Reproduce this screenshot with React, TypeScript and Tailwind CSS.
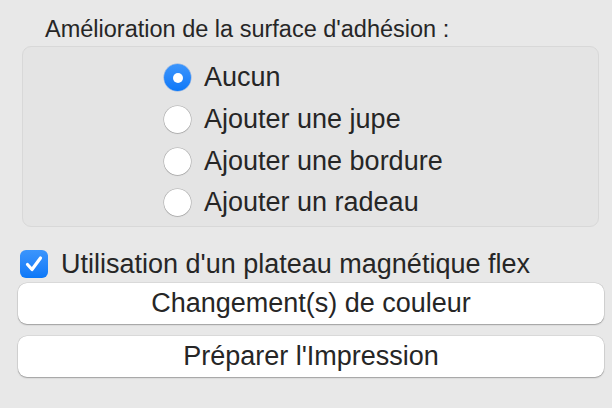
import React from 'react';

const options = ['Aucun', 'Ajouter une jupe', 'Ajouter une bordure', 'Ajouter un radeau'];

const Radio: React.FC<{ checked: boolean }> = ({ checked }) =>
  checked ? (
    <span className="flex h-[27px] w-[27px] shrink-0 items-center justify-center rounded-full bg-gradient-to-b from-[#3b95fc] to-[#0a78f8] shadow-[0_0_0_0.5px_rgba(0,90,220,0.4)]">
      <span className="h-[10px] w-[10px] rounded-full bg-white" />
    </span>
  ) : (
    <span className="h-[27px] w-[27px] shrink-0 rounded-full bg-white shadow-[0_0_0_0.5px_rgba(0,0,0,0.25),0_1px_1px_rgba(0,0,0,0.12)]" />
  );

const App: React.FC = () => {
  const selected = 0;

  return (
    <div
      className="flex h-[408px] w-[612px] flex-col bg-[#e8e8e8] text-[#262626]"
      style={{ fontFamily: '"Liberation Sans", Arial, sans-serif' }}
    >
      <div className="pl-[45px] pt-[14px] text-[23.5px] leading-[30px]">
        Amélioration de la surface d'adhésion :
      </div>

      <div className="ml-[22px] mt-[2px] h-[181px] w-[577px] rounded-[9px] border border-[#d8d8d8] bg-[#e4e4e4] pl-[141px] pt-[10px]">
        {options.map((label, i) => (
          <div key={label} className="flex h-[41.7px] items-center gap-[13px]">
            <Radio checked={i === selected} />
            <span className="text-[27px] leading-none">{label}</span>
          </div>
        ))}
      </div>

      <div className="ml-[20px] mt-[23px] flex items-center gap-[13px]">
        <span className="flex h-[28px] w-[28px] shrink-0 items-center justify-center rounded-[6px] bg-gradient-to-b from-[#3b95fc] to-[#0a78f8]">
          <svg width="22" height="22" viewBox="0 0 22 22" fill="none">
            <path d="M4.5 11.5l4.5 5L17.5 5" stroke="white" strokeWidth="3.2" strokeLinecap="round" strokeLinejoin="round" />
          </svg>
        </span>
        <span className="text-[27px] leading-none">Utilisation d'un plateau magnétique flex</span>
      </div>

      <div className="ml-[18px] mt-[5px] flex w-[586px] flex-col gap-[12px]">
        {['Changement(s) de couleur', "Préparer l'Impression"].map((label) => (
          <button
            key={label}
            className="flex h-[41px] items-center justify-center rounded-[9px] bg-white text-[27px] leading-none text-[#262626] shadow-[0_0_0_0.5px_rgba(0,0,0,0.12),0_1px_1.5px_rgba(0,0,0,0.28)]"
          >
            {label}
          </button>
        ))}
      </div>
    </div>
  );
};

export default App;
